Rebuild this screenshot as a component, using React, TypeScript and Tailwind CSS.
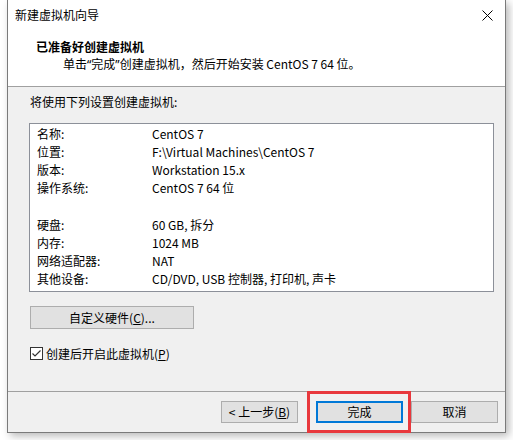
import React from "react";

const FONT = { fontFamily: '"Noto Sans CJK SC", "Noto Sans", sans-serif' };
const LATIN = { fontFamily: '"Noto Sans", sans-serif' };

const rows: Array<[string, string] | null> = [
  ["名称:", "CentOS 7"],
  ["位置:", "F:\\Virtual Machines\\CentOS 7"],
  ["版本:", "Workstation 15.x"],
  ["操作系统:", "CentOS 7 64 位"],
  null,
  ["硬盘:", "60 GB, 拆分"],
  ["内存:", "1024 MB"],
  ["网络适配器:", "NAT"],
  ["其他设备:", "CD/DVD, USB 控制器, 打印机, 声卡"],
];

function Btn({
  children,
  className = "",
  primary = false,
}: {
  children: React.ReactNode;
  className?: string;
  primary?: boolean;
}) {
  return (
    <div
      className={`flex h-[22px] items-center justify-center bg-[#e1e1e1] text-[12px] leading-none text-black ${
        primary ? "border-2 border-[#0078d7]" : "border border-[#adadad]"
      } ${className}`}
    >
      {children}
    </div>
  );
}

export default function App() {
  return (
    <div className="h-[440px] w-[513px] overflow-hidden bg-white pl-[7px]" style={FONT}>
      <div className="relative flex h-[433px] w-[499px] flex-col border-x border-b border-[#7a7a7a] bg-[#f0f0f0] text-[12px] text-black shadow-[3px_3px_8px_rgba(0,0,0,0.28)]">
        {/* title bar + header */}
        <div className="bg-white">
          <div className="flex h-[30px] items-center justify-between pl-[7px] pr-[10px]">
            <span className="leading-none">新建虚拟机向导</span>
            <svg width="11" height="11" viewBox="0 0 11 11" className="mr-[2px]">
              <path d="M0.5 0.5 L10.5 10.5 M10.5 0.5 L0.5 10.5" stroke="#000" strokeWidth="1" />
            </svg>
          </div>
          <div className="h-[57px] border-b border-[#a0a0a0] pt-[8px]">
            <div className="pl-[28px] text-[12px] font-bold leading-[18px]">已准备好创建虚拟机</div>
            <div className="pl-[55px] leading-[16px]">
              单击<span style={LATIN}>“</span>完成<span style={LATIN}>”</span>创建虚拟机，然后开始安装 CentOS 7 64 位。
            </div>
          </div>
        </div>

        {/* body */}
        <div className="flex-1 pt-[6px]">
          <div className="pl-[22px] leading-[18px]">将使用下列设置创建虚拟机:</div>
          <div className="ml-[21px] mt-[12px] h-[169px] w-[465px] border border-[#8c9099] bg-white pl-[7px] pt-[1px]">
            {rows.map((r, i) =>
              r ? (
                <div key={i} className="flex h-[18px] items-center leading-none">
                  <span className="w-[115px] shrink-0">{r[0]}</span>
                  <span>{r[1]}</span>
                </div>
              ) : (
                <div key={i} className="h-[19px]" />
              ),
            )}
          </div>
          <Btn className="ml-[22px] mt-[14px] h-[23px] w-[164px]">
            自定义硬件(<span className="underline">C</span>)...
          </Btn>
          <label className="ml-[22px] mt-[18px] flex items-center gap-[3px] leading-none">
            <span className="flex h-[13px] w-[13px] items-center justify-center border border-[#333] bg-white">
              <svg width="11" height="11" viewBox="0 0 11 11">
                <path d="M1.5 5.5 L4 8 L9.5 2.5" stroke="#333" strokeWidth="1.2" fill="none" />
              </svg>
            </span>
            <span>
              创建后开启此虚拟机(<span className="underline">P</span>)
            </span>
          </label>
        </div>

        {/* footer */}
        <div className="flex h-[41px] items-start justify-end border-t border-[#a0a0a0] pr-[7px] pt-[9px]">
          <Btn className="w-[77px]">
            &lt; 上一步(<span className="underline">B</span>)
          </Btn>
          <Btn primary className="ml-[18px] w-[87px]">
            完成
          </Btn>
          <Btn className="ml-[8px] w-[87px]">取消</Btn>
        </div>

        {/* red highlight annotation */}
        <div className="absolute left-[299px] top-[391px] h-[42px] w-[104px] border-[3px] border-[#e8383d]" />
      </div>
    </div>
  );
}
